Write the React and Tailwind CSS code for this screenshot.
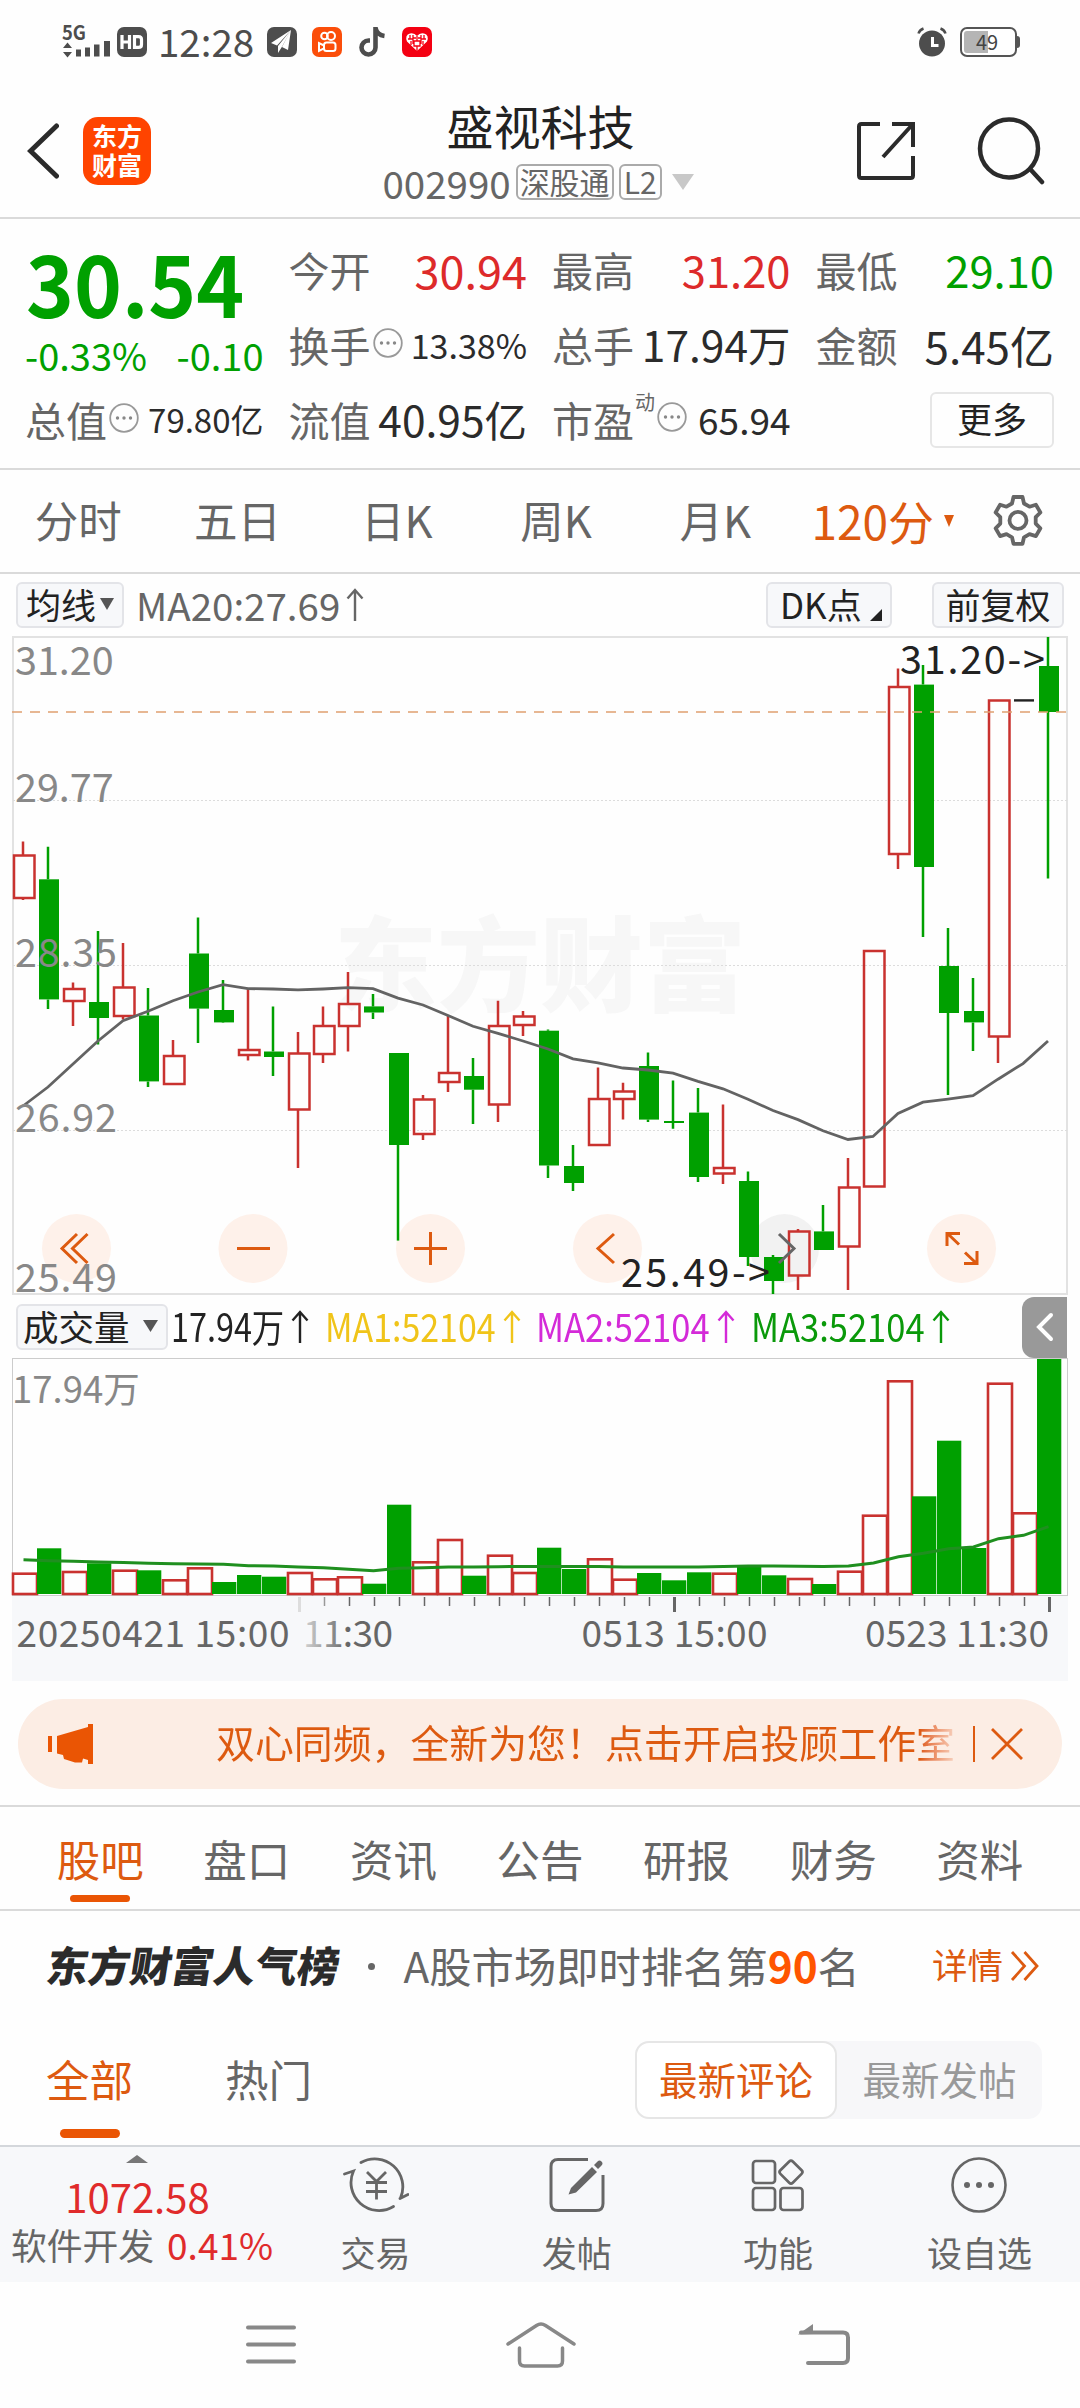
import React, { useState } from 'react';

const RED = '#c9322f';
const GREEN = '#00a000';
const STEP = 25;

// [type, high, bodyTop, bodyBottom, low] in chart pixels, one row per 120 min bar
const candles = [
  ['up', 205.6, 219.5, 262, 264],
  ['down', 210.8, 243.3, 363.4, 373],
  ['up', 346.5, 353, 365, 390],
  ['down', 295, 366, 382, 408.5],
  ['up', 307, 351.5, 380, 383.4],
  ['down', 352, 379.5, 445.4, 451],
  ['up', 404, 420, 448, 448],
  ['down', 281.5, 317.5, 372.6, 407],
  ['down', 344, 374, 386.4, 387],
  ['up', 352, 414, 419, 424.6],
  ['down', 370.4, 415.5, 421, 440],
  ['up', 396, 417.5, 473.5, 532],
  ['up', 370.4, 390, 418, 427],
  ['up', 336, 368, 390, 415.5],
  ['down', 358, 370.4, 376.5, 383],
  ['down', 417, 417, 509, 604.6],
  ['up', 459, 463.5, 498, 504],
  ['up', 380, 437, 446, 456],
  ['down', 422, 440, 453.7, 488],
  ['up', 364.7, 390, 468.5, 486],
  ['up', 375, 380.5, 389, 400],
  ['down', 393.4, 394.7, 529.5, 542],
  ['down', 509, 530, 547, 555],
  ['up', 431.5, 463, 509, 509],
  ['up', 446.7, 455.5, 463, 483.6],
  ['down', 416.4, 430, 483.6, 486],
  ['down', 444.5, 485, 487, 492.7],
  ['down', 452, 476.6, 541, 546],
  ['up', 468.4, 532, 537.5, 548],
  ['down', 535.6, 545, 621, 630],
  ['down', 619, 621, 645, 658],
  ['up', 593, 595.5, 639.5, 654],
  ['down', 569, 595.4, 614, 614],
  ['up', 522, 551.5, 610.5, 654],
  ['up', 315, 315, 550.5, 551],
  ['up', 32.6, 51, 218, 233],
  ['down', 29, 48.6, 231, 301],
  ['down', 292, 330, 377, 459],
  ['down', 342, 375, 386.4, 415],
  ['up', 64.5, 64.5, 400.5, 427],
  ['flat', 64.4, 64.4, 64.4, 64.4],
  ['down', 1, 30, 76, 242.5],
];

const ma20 = [
  470, 451, 428, 405, 384.7, 375.2, 364.7, 356, 348.7, 352.6, 353, 353.9, 353, 351.7,
  352.6, 362.1, 369, 379.5, 390.3, 397.3, 405, 413, 422.8, 426.8, 432, 434, 437.2, 445.4,
  452.8, 463.2, 474.5, 483.6, 494.8, 503.5, 500.5, 477.5, 466.2, 463.2, 459.7, 443.2, 427.6, 405,
];

const volumes = [
  214.7, 190.3, 213, 205.3, 211.7, 212.3, 221.3, 209.3, 224, 217, 218.7, 214, 220.3, 218.3,
  225.7, 146.7, 203.3, 181, 217.7, 196.7, 214, 189.7, 211, 200.3, 220.7, 215, 222.3, 214.3,
  214.7, 208.7, 217.3, 220, 226, 212.7, 156.7, 22.3, 138.3, 82.7, 190, 24.7, 154.3, 1,
];

// bars 7 and 40 are coloured by close against previous close, not by candle body
const volumeUp = [0, 2, 4, 6, 7, 11, 12, 13, 16, 17, 19, 20, 23, 24, 28, 31, 33, 34, 35, 39, 40];

const volumeMa = [
  201.7, 202.7, 203.3, 204, 204.5, 205.3, 205.7, 206, 206.3, 207.7, 208, 209, 209.7, 211.3,
  212.7, 210.3, 209.7, 209, 209, 208.7, 208.5, 208.5, 208.5, 208.5, 209, 209, 209, 209,
  208.5, 208, 208, 208.3, 208.5, 208, 205, 198.7, 195.3, 190.7, 189, 180.7, 177.3, 168.7,
];

const toPoints = (values, x0) => values.map((y, i) => `${x0 + i * STEP},${y}`).join(' ');

const Arrow = ({ className = '' }) => (
  <svg viewBox="0 0 20 34" className={`h-[34px] w-5 shrink-0 ${className}`} fill="none" stroke="currentColor" strokeWidth="2.4">
    <path d="M10 33V2M2.5 10.5 10 2l7.5 8.5" />
  </svg>
);

const Dots = () => (
  <svg viewBox="0 0 30 30" className="h-[30px] w-[30px] shrink-0">
    <circle cx="15" cy="15" r="13.8" fill="none" stroke="#999" strokeWidth="1.8" />
    <circle cx="8.5" cy="15" r="1.7" fill="#888" />
    <circle cx="15" cy="15" r="1.7" fill="#888" />
    <circle cx="21.5" cy="15" r="1.7" fill="#888" />
  </svg>
);

const StatusBar = () => (
  <div className="flex h-[84px] items-center pl-[62px] pr-[60px] text-[#4d4d4d]">
    <svg viewBox="0 0 48 34" className="mb-[2px] h-[34px] w-12 overflow-visible" fill="#4d4d4d">
      <text x="0" y="16" fontSize="20" fontWeight="700" textLength="24" lengthAdjust="spacingAndGlyphs">5G</text>
      <path d="M5.5 18.5 10 24H1zM5.5 33.5 10 28H1z" />
      <path d="M14 25.5h5v7h-5zM23 23.5h5v9h-5zM32 20.5h5.5v12h-5.5zM42 17h6v15.5h-6z" />
    </svg>
    <div className="ml-[7px] flex h-[30px] w-[30px] items-center justify-center rounded-[7px] bg-[#4d4d4d]">
      <svg viewBox="0 0 24 16" className="h-4 w-6" fill="none" stroke="#fff" strokeWidth="3.2">
        <path d="M2 1v14M9.5 1v14M2 8h7.5M14.5 2.6h4q3 0 3 3v4.8q0 3-3 3h-4z" />
      </svg>
    </div>
    <div className="ml-[11px] w-[98px] pb-[3px] text-[38.5px] leading-none">12:28</div>
    <svg viewBox="0 0 30 30" className="ml-[11px] h-[30px] w-[30px]">
      <rect width="30" height="30" rx="7" fill="#4d4d4d" />
      <path d="M24 3 4 16l6 2.5zM24 3 11 19v7l3.5-5.5zM24 3 15 20l6 3z" fill="#fff" />
    </svg>
    <svg viewBox="0 0 30 30" className="ml-[15px] h-[30px] w-[30px]" fill="none" stroke="#fff" strokeWidth="2">
      <rect width="30" height="30" rx="7" fill="#fb4e0a" stroke="none" />
      <circle cx="12.5" cy="9" r="3.3" />
      <circle cx="19" cy="9" r="4" />
      <rect x="12" y="15.5" width="11.5" height="8.5" rx="2.5" />
      <path d="m12 18.5-5-2.5v8l5-2.5z" />
    </svg>
    <svg viewBox="0 0 26 30" className="ml-[17px] h-[30px] w-[26px]" fill="none" stroke="#4d4d4d" strokeWidth="4.6">
      <path d="M16.5 0v20.5a7 7 0 1 1-7-7h1.5M16.500 1q1.5 7 9 8" />
    </svg>
    <svg viewBox="0 0 30 30" className="ml-[17px] h-[30px] w-[30px]">
      <rect width="30" height="30" rx="7" fill="#f40012" />
      <path d="M15 24 5 14.5Q2.5 8 8 6.500q4-1 7 2.500 3-3.500 7-2.500 5.500 1.500 3 8z" fill="#fff" />
      <path d="M8 8v4M6 12h5v5M15 9v5M12 14h6v5h-6zM22 8v4M24 12h-5v5M15 19v5M11 8v3h3M19 8v3h-3M9 14v4M21 14v4" fill="none" stroke="#f40012" strokeWidth="1.3" />
    </svg>
    <svg viewBox="0 0 30 30" className="ml-auto h-[30px] w-[30px]">
      <circle cx="15" cy="16.5" r="13" fill="#4d4d4d" />
      <path d="M15.5 10v8.500h6" fill="none" stroke="#fff" strokeWidth="3" />
      <path d="M1.500 6.500q1-3.500 5-5M28.500 6.500q-1-3.500-5-5" fill="none" stroke="#4d4d4d" strokeWidth="2.5" />
    </svg>
    <div className="ml-[13px] flex h-[30px] w-[57px] rounded-[7px] border-2 border-[#555] bg-white p-[2px]">
      <div className="relative h-full w-6 rounded-l-[3px] bg-[#b5b5b5]">
        <span className="absolute left-[12px] top-[-1px] text-[20px] leading-[23px] text-[#444]">49</span>
      </div>
    </div>
    <div className="h-3 w-[3px] rounded-r-sm bg-[#555]" />
  </div>
);

const Header = () => (
  <header className="flex h-[135px] items-center border-b-2 border-[#dadada] pr-[35px]">
    <svg viewBox="0 0 32 56" className="ml-[27px] h-14 w-8" fill="none" stroke="#2b2b2b" strokeWidth="5" strokeLinecap="round">
      <path d="M29.5 3 3.5 28l26 25" />
    </svg>
    <div className="ml-6 flex h-[68px] w-[68px] flex-col items-center justify-center rounded-[15px] bg-[#ff4400] pb-[1px] text-[25px] font-bold leading-[29px] text-white">
      <span>东方</span>
      <span>财富</span>
    </div>
    <div className="flex flex-1 flex-col items-center pl-[74px]">
      <div className="text-[47px] leading-[60px] text-[#222]">盛视科技</div>
      <div className="ml-[-5px] flex items-center pt-[3px] text-[#666]">
        <span className="text-[38.5px] leading-[48px]">002990</span>
        <span className="ml-[5px] h-9 rounded-md border-2 border-[#aaa] px-[2px] text-[30px] leading-[30px]">深股通</span>
        <span className="ml-[5px] h-9 rounded-md border-2 border-[#aaa] px-[3px] text-[30px] leading-[30px]">L2</span>
        <svg viewBox="0 0 22 16" className="ml-[10px] h-4 w-[22px]" fill="#c8c8c8"><path d="M0 0h22L11 16z" /></svg>
      </div>
    </div>
    <svg viewBox="0 0 60 60" className="mr-[61px] h-[60px] w-[60px]" fill="none" stroke="#2b2b2b" strokeWidth="4">
      <path d="M24 3H5.5Q3 3 3 5.5v49Q3 57 5.5 57h49q2.5 0 2.5-2.5V35M57 26V3H36M56 4 27 36" />
    </svg>
    <svg viewBox="0 0 68 68" className="h-[68px] w-[68px]" fill="none" stroke="#2b2b2b" strokeWidth="4.5" strokeLinecap="round">
      <circle cx="32" cy="31.5" r="29" />
      <path d="m54 53 11 12" />
    </svg>
  </header>
);

const Quote = ({ label, value, mark, color = 'text-[#2b2b2b]', size = 'text-[42.5px]' }) => (
  <div className="flex h-[75px] items-center justify-between whitespace-nowrap">
    <span className="ml-[-1px] flex items-center text-[41px] leading-none text-[#666]">
      {label}
      {mark === 'dyn' && <sup className="self-start text-[20px] leading-none top-[-7px] ml-[1px]">动</sup>}
      {mark && <span className={mark === 'dyn' ? 'ml-[2px] mt-[-6px]' : 'ml-[2px] mt-[-4px]'}><Dots /></span>}
    </span>
    <span className={`leading-none ${color} ${size}`}>{value}</span>
  </div>
);

const QuotePanel = () => (
  <section className="grid h-[251px] grid-cols-4 content-start gap-x-[26px] border-b-2 border-[#dadada] px-[26px] pt-[13px]">
    <div className="row-span-2 flex flex-col text-[#00a000]">
      <div className="mt-[6px] origin-left scale-x-[0.945] text-[86px] font-bold leading-[86px]">30.54</div>
      <div className="mt-[11px] ml-[-1px] flex justify-between text-[38px] leading-[40px]">
        <span>-0.33%</span>
        <span>-0.10</span>
      </div>
    </div>
    <Quote label="今开" value="30.94" color="text-[#dd2a2a]" size="text-[45px]" />
    <Quote label="最高" value="31.20" color="text-[#dd2a2a]" size="text-[43.5px]" />
    <Quote label="最低" value="29.10" color="text-[#00a000]" size="text-[43.5px]" />
    <Quote label="换手" value="13.38%" mark="info" size="text-[34px]" />
    <Quote label="总手" value="17.94万" />
    <Quote label="金额" value="5.45亿" size="text-[44px]" />
    <Quote label="总值" value="79.80亿" mark="info" size="text-[33px]" />
    <Quote label="流值" value="40.95亿" />
    <Quote label="市盈" value="65.94" mark="dyn" size="text-[37px]" />
    <div className="flex h-[75px] items-center justify-end">
      <button className="h-14 w-[124px] rounded-md border-2 border-[#e6e6e6] pb-1 text-[35px] leading-none text-[#222]">更多</button>
    </div>
  </section>
);

const periods = ['分时', '五日', '日K', '周K', '月K'];

const PeriodTabs = () => (
  <nav className="flex h-[104px] items-center border-b-2 border-[#dadada] text-[43.5px] leading-none text-[#666]">
    {periods.map(p => (
      <button key={p} className="w-[159.3px] pr-[3px] pb-[3px] leading-none">{p}</button>
    ))}
    <button className="ml-[15px] flex items-center whitespace-nowrap text-[46px] leading-none text-[#dd5a10]">
      <span className="pb-[3px]">120分</span>
      <svg viewBox="0 0 10 12" className="ml-[10px] h-3 w-[10px]" fill="#dd5a10"><path d="M0 0h10L5 12z" /></svg>
    </button>
    <svg viewBox="0 0 52 52" className="ml-auto mr-[36px] mt-[-3px] h-[52px] w-[52px]" fill="none" stroke="#666" strokeWidth="3.8" strokeLinejoin="round">
      <path d="M21.5 3h9l1.5 6.5 5.5 3.2 6.4-2 4.5 7.8-4.7 4.7v6.4l4.7 4.7-4.5 7.800-6.400-2-5.500 3.200-1.500 6.500h-9L20 43.300l-5.500-3.200-6.400 2-4.500-7.800 4.700-4.700v-6.400l-4.700-4.700 4.500-7.800 6.400 2L20 9.500z" />
      <circle cx="26" cy="26.4" r="8.5" />
    </svg>
  </nav>
);

const Chip = ({ className, children }) => (
  <button className={`flex h-[46px] items-center rounded-md border-2 border-[#e3e4e8] bg-[#f7f8fa] pb-[3px] leading-none whitespace-nowrap text-[#222] ${className}`}>
    {children}
  </button>
);

const IndicatorRow = () => (
  <div className="flex h-[62px] items-center pl-4 pr-4">
    <Chip className="w-[108px] px-2 text-[35px]">
      均线
      <svg viewBox="0 0 14 12" className="ml-1 h-3 w-[14px] shrink-0" fill="#555"><path d="M0 0h14L7 12z" /></svg>
    </Chip>
    <span className="ml-[12px] pb-[2px] text-[38.5px] leading-none text-[#666]">MA20:27.69</span>
    <Arrow className="ml-[5px] text-[#666]" />
    <Chip className="ml-auto w-[126px] pl-3 text-[35px]">
      DK点
      <svg viewBox="0 0 12 12" className="ml-[8px] mt-[22px] h-3 w-3 shrink-0" fill="#222"><path d="M12 0v12H0z" /></svg>
    </Chip>
    <Chip className="ml-[40px] w-[132px] justify-center text-[35px]">前复权</Chip>
  </div>
);

const KLineChart = () => (
  <svg viewBox="0 0 1080 660" className="block h-[660px] w-full overflow-visible">
    <g fill="none" stroke="#e2e2e2" strokeWidth="2">
      <rect x="13" y="1" width="1054" height="657" />
    </g>
    <text x="334" y="368" fontSize="103" fontWeight="900" fill="#f7f7f7">东方财富</text>
    <g stroke="#dcdcdc" strokeDasharray="2 2">
      <path d="M13 164.5h1054M13 329.5h1054M13 494.5h1054" />
    </g>
    {[76.5, 253, 430.5, 607.5, 961.5].map(cx => (
      <circle key={cx} cx={cx} cy="612.5" r="34.5" fill="#fef1ea" />
    ))}
    <circle cx="784.5" cy="612.5" r="34.5" fill="#f2f2f2" />

    {candles.map(([type, high, top, bottom, low], i) => {
      const x = 23 + i * STEP;
      if (type === 'flat') {
        return <path key={i} d={`M${x - 9} ${top}h20`} stroke="#222" strokeWidth="2.4" />;
      }
      const color = type === 'up' ? RED : GREEN;
      return (
        <g key={i} stroke={color} strokeWidth="2.500">
          <path d={`M${x} ${high}V${top}M${x} ${bottom}V${low}`} />
          {type === 'up'
            ? <rect x={x - 9} y={top} width="20.5" height={bottom - top} fill="none" />
            : <rect x={x - 9} y={top} width="20" height={bottom - top} fill={color} stroke="none" />}
        </g>
      );
    })}
    <path d="M12 76H1067" stroke="#e0a070" strokeWidth="1.600" strokeDasharray="10 8" />
    <polyline points={toPoints(ma20, 23)} fill="none" stroke="#636363" strokeWidth="2.800" />

    <g fill="#888" fontSize="39.5">
      <text x="15" y="39">31.20</text>
      <text x="15" y="166">29.77</text>
      <text x="15" y="331" textLength="102">28.35</text>
      <text x="15" y="495.5" textLength="102">26.92</text>
      <text x="15" y="656" textLength="102">25.49</text>
    </g>
    <g fill="#222" fontSize="39.5">
      <text x="900" y="38" textLength="145">31.20-&gt;</text>
      <text x="621" y="651" textLength="149">25.49-&gt;</text>
    </g>

    {/* pan and zoom buttons */}
    <g fill="none" stroke="#dd5a10" strokeWidth="3">
      <path d="M77 598 62 612.5 77 627M87.5 598l-15 14.5 15 14.5" />
      <path d="M237 612.5h33M414 612.5h33M430.5 596v33" />
      <path d="m614 598-16 14.5 16 14.5" />
      <path d="m779 598 15 14.5-15 14.5" stroke="#666" />
      <path d="M947 610v-12.5h13M948 598l11 10.5M977 615v12.5h-13M976 627l-11-10.5" />
    </g>
  </svg>
);

const Squeezed = ({ className, children }) => (
  <span className={`inline-block origin-left whitespace-nowrap text-[39px] leading-none ${className}`}>{children}</span>
);

const VolumeHeader = () => (
  <div className="flex h-[62px] items-center pl-4 pr-[13px]">
    <Chip className="w-[152px] shrink-0 px-[5px] text-[35.5px]">
      成交量
      <svg viewBox="0 0 15 12" className="ml-[13px] h-3 w-[15px] shrink-0" fill="#555"><path d="M0 0h15L7.5 12z" /></svg>
    </Chip>
    <div className="ml-[3px] w-[119px] shrink-0 pb-[2px]"><Squeezed className="scale-x-[0.83] text-[#222]">17.94万</Squeezed></div>
    <Arrow className="text-[#222]" />
    <div className="ml-[15px] w-[177px] shrink-0 pb-[2px]"><Squeezed className="scale-x-[0.87] text-[#f0c419]">MA1:52104</Squeezed></div>
    <Arrow className="text-[#f0c419]" />
    <div className="ml-[14px] w-[180px] shrink-0 pb-[2px]"><Squeezed className="scale-x-[0.885] text-[#d42ad8]">MA2:52104</Squeezed></div>
    <Arrow className="text-[#d42ad8]" />
    <div className="ml-[15px] w-[180px] shrink-0 pb-[2px]"><Squeezed className="scale-x-[0.885] text-[#0a990a]">MA3:52104</Squeezed></div>
    <Arrow className="text-[#0a990a]" />
    <button className="ml-auto flex h-[61px] w-[45px] items-center justify-center rounded-l-[12px] bg-[#999]">
      <svg viewBox="0 0 18 30" className="h-[30px] w-[18px]" fill="none" stroke="#fff" strokeWidth="4" strokeLinecap="round">
        <path d="M15 3 3 15l12 12" />
      </svg>
    </button>
  </div>
);

const VolumeChart = () => (
  <svg viewBox="0 0 1080 323" className="block h-[323px] w-full overflow-visible">
    <defs>
      <linearGradient id="fade" x1="0" x2="1">
        <stop offset="0" stopColor="#d4d4d4" />
        <stop offset="0.5" stopColor="#666" />
      </linearGradient>
    </defs>
    <rect x="12" y="238" width="1056" height="85" fill="#f7f8fa" />
    <rect x="12.5" y="0.5" width="1055" height="237" fill="none" stroke="#ccc" />
    <text x="12" y="45" fontSize="36.5" fill="#888">17.94万</text>
    {volumes.map((y, i) => {
      const x = 12 + i * STEP;
      return volumeUp.includes(i)
        ? <rect key={i} x={x + 1} y={y + 1} width="24" height={235 - y} fill="none" stroke={RED} strokeWidth="2.6" />
        : <rect key={i} x={x} y={y} width="24.3" height={236 - y} fill={GREEN} />;
    })}
    <polyline points={toPoints(volumeMa, 23.5)} fill="none" stroke="#1f8f1f" strokeWidth="3" />
    {volumes.map((_, i) => {
      if (i < 11) return null;
      const x = 24.5 + i * STEP;
      const major = i === 11 || i === 26 || i === 41;
      return (
        <path
          key={i}
          d={`M${x} 239v${major ? 15 : 9}`}
          stroke={i === 11 ? '#ddd' : i === 12 ? '#999' : '#666'}
          strokeWidth={major ? 3 : 1.5}
        />
      );
    })}
    <g fill="#666" fontSize="37">
      <text x="16.5" y="288.5" textLength="273">20250421 15:00</text>
      <text x="303" y="288.5" textLength="90" fill="url(#fade)">11:30</text>
      <text x="581.5" y="288.5" textLength="186">0513 15:00</text>
      <text x="865" y="288.5" textLength="184">0523 11:30</text>
    </g>
  </svg>
);

const Banner = () => (
  <div className="flex h-[126px] items-start border-b-2 border-[#dadada] px-[18px] pt-[18px]">
    <div className="flex h-[90px] w-full items-center rounded-full bg-[#fcede4] pl-[30px] pr-[39px] text-[#dd5a10]">
      <svg viewBox="0 0 46 40" className="h-10 w-[46px] shrink-0" fill="#ea5504">
        <path d="M0 12h4v16H0zM9 12 40 3V0h5v40h-5v-4l-5-1.5-1 4h-7L16 35l-1-4-6-1.5z" />
      </svg>
      <div className="ml-[122px] w-[742px] overflow-hidden whitespace-nowrap bg-gradient-to-r from-[#dd5a10] from-95% to-[#f7d9c8] bg-clip-text pb-[8px] pt-[2px] text-[38.9px] leading-[48px] text-transparent">
        双心同频，全新为您！点击开启投顾工作室
      </div>
      <div className="ml-[16px] h-9 w-[2px] shrink-0 bg-[#dd5a10]" />
      <svg viewBox="0 0 32 32" className="ml-4 h-8 w-8 shrink-0" fill="none" stroke="#dd5a10" strokeWidth="2.8">
        <path d="m1 1 30 30M31 1 1 31" />
      </svg>
    </div>
  </div>
);

const sections = ['股吧', '盘口', '资讯', '公告', '研报', '财务', '资料'];

const SectionTabs = ({ active, onChange }) => (
  <nav className="flex h-[104px] border-b-2 border-[#dadada] px-[27px] text-[43.5px]">
    {sections.map(s => (
      <button
        key={s}
        onClick={() => onChange(s)}
        className={`flex flex-1 flex-col items-center whitespace-nowrap pt-[24px] leading-[56px] ${s === active ? 'text-[#dd5a10]' : 'text-[#666]'}`}
      >
        {s}
        {s === active && <span className="mt-[8px] h-[7px] w-[60px] rounded-full bg-[#ea5504]" />}
      </button>
    ))}
  </nav>
);

const RankRow = () => (
  <div className="flex h-[110px] items-center pl-[47px] pr-[40px] leading-none whitespace-nowrap text-[#666]">
    <span className="-skew-x-[9deg] pb-[2px] text-[41.8px] font-black leading-none text-[#2b2b2b]">东方财富人气榜</span>
    <span className="ml-[28px] h-[7px] w-[7px] rounded-full bg-[#666]" />
    <span className="ml-[29px] pb-[2px] text-[42.3px] leading-none">
      A股市场即时排名第<b className="text-[#ff5500]">90</b>名
    </span>
    <span className="ml-auto pb-[4px] text-[35.5px] leading-none text-[#dd5a10]">详情</span>
    <svg viewBox="0 0 30 30" className="ml-[7px] h-[30px] w-[30px]" fill="none" stroke="#dd5a10" strokeWidth="2.8">
      <path d="m2 1 12.5 14L2 29M14.5 1 27 15 14.5 29" />
    </svg>
  </div>
);

const FilterRow = ({ sort, onSort }) => (
  <div className="flex h-[124px] items-start pl-[46px] pr-[38px]">
    <div className="flex flex-col items-center pt-[30px] text-[43.5px] leading-[56px] text-[#dd5a10]">
      全部
      <span className="mt-[22px] h-[9px] w-[60px] rounded-full bg-[#ea5504]" />
    </div>
    <div className="ml-[92px] pt-[30px] text-[43.5px] leading-[56px] text-[#666]">热门</div>
    <div className="ml-auto mt-[20px] flex h-[78px] w-[407px] rounded-[14px] bg-[#f7f7f9] text-[38.5px] leading-none">
      {['最新评论', '最新发帖'].map(s => (
        <button
          key={s}
          onClick={() => onSort(s)}
          className={
            s === sort
              ? 'w-[202px] rounded-[14px] border-2 border-[#e6e6e6] bg-white pb-[3px] text-[#dd5a10]'
              : 'w-[205px] pb-[3px] text-[#999]'
          }
        >
          {s}
        </button>
      ))}
    </div>
  </div>
);

const TradeIcon = () => (
  <svg viewBox="0 0 66 60" className="h-[60px] w-[66px]" fill="none" stroke="#666" strokeWidth="2.8" strokeLinecap="round">
    <path d="M18 7.5A28 28 0 0 1 57.500 43M1.500 19l9-3A28 28 0 0 0 50.500 51.500M65 39.500l-8 4" />
    <path d="m24 17 9.5 9.5L43 17M23 27.5h21M23 36.500h21M33.500 27v17.500" strokeLinecap="butt" />
  </svg>
);

const PostIcon = () => (
  <svg viewBox="0 0 56 56" className="h-14 w-14" fill="none" stroke="#666" strokeWidth="3">
    <path d="M39 2.5H9Q2 2.5 2 9.500v37q0 7 7 7h38q7 0 7-7V18" />
    <path d="M19.500 37.500 22 31 43 10l5 5-21 20.500zM45 8l3.500-3.500q2-2 4 0t0 4L49 12z" fill="#666" stroke="none" />
  </svg>
);

const GridIcon = () => (
  <svg viewBox="0 0 54 54" className="h-[54px] w-[54px]" fill="none" stroke="#666" strokeWidth="2.7">
    <rect x="2" y="3" width="22" height="22" rx="3" />
    <rect x="2" y="30" width="22" height="22" rx="3" />
    <rect x="29.5" y="30" width="22" height="22" rx="3" />
    <rect x="31.3" y="5.3" width="17.5" height="17.5" rx="2.5" transform="rotate(45 40 14)" />
  </svg>
);

const MoreIcon = () => (
  <svg viewBox="0 0 56 56" className="h-14 w-14">
    <circle cx="28" cy="28" r="26.5" fill="none" stroke="#666" strokeWidth="2.6" />
    <circle cx="16" cy="28" r="3" fill="#666" />
    <circle cx="28" cy="28" r="3" fill="#666" />
    <circle cx="40" cy="28" r="3" fill="#666" />
  </svg>
);

const actions = [
  { label: '交易', Icon: TradeIcon },
  { label: '发帖', Icon: PostIcon },
  { label: '功能', Icon: GridIcon },
  { label: '设自选', Icon: MoreIcon },
];

const BottomBar = () => (
  <footer className="flex h-[137px] border-t-2 border-[#d4d7db] bg-[#f7f8fa] text-[#666]">
    <div className="flex w-[275px] flex-col items-center whitespace-nowrap pt-[8px]">
      <svg viewBox="0 0 22 8" className="h-2 w-[22px]" fill="#777"><path d="M0 8h22L11 0z" /></svg>
      <div className="mt-[10px] text-[40px] leading-[46px] text-[#e02b2b]">1072.58</div>
      <div className="mt-[3px] ml-[9px] flex items-center text-[35.8px] leading-[44px]">
        软件开发<span className="ml-[13px] text-[37px] text-[#e02b2b]">0.41%</span>
      </div>
    </div>
    {actions.map(({ label, Icon }) => (
      <button key={label} className="flex w-[201.300px] flex-col items-center pt-[8px] text-[35px] leading-none">
        <span className="flex h-[60px] items-center"><Icon /></span>
        <span className="mt-[19px]">{label}</span>
      </button>
    ))}
  </footer>
);

const SystemNav = () => (
  <div className="flex h-[125px] items-center pl-[246px]">
    <svg viewBox="0 0 50 40" className="h-10 w-[50px]" stroke="#888" strokeWidth="4" strokeLinecap="round">
      <path d="M2 2.5h46M2 19.5h46M2 36.5h46" />
    </svg>
    <svg viewBox="0 0 70 46" className="ml-[210px] h-[46px] w-[70px]" fill="none" stroke="#888" strokeWidth="3.500" strokeLinecap="round">
      <path d="M2 22 30.500 3.500q4.500-3 9 0L68 22M13.500 26v13q0 5 5 5h33q5 0 5-5V26" />
    </svg>
    <svg viewBox="0 0 52 42" className="ml-[222px] h-[42px] w-[52px]" fill="none" stroke="#888" strokeWidth="4" strokeLinecap="round">
      <path d="M3 8.500h42q5 0 5 5V34q0 5-5 5H10" />
      <path d="M0 10.500 15 0v10z" fill="#888" stroke="none" />
    </svg>
  </div>
);

const App = () => {
  const [section, setSection] = useState('股吧');
  const [sort, setSort] = useState('最新评论');

  return (
    <div className="flex h-[2408px] w-[1080px] flex-col overflow-hidden bg-[#fefefe] font-['Noto_Sans_CJK_SC',sans-serif] text-[#222]">
      <StatusBar />
      <Header />
      <QuotePanel />
      <PeriodTabs />
      <IndicatorRow />
      <KLineChart />
      <VolumeHeader />
      <VolumeChart />
      <Banner />
      <SectionTabs active={section} onChange={setSection} />
      <RankRow />
      <FilterRow sort={sort} onSort={setSort} />
      <BottomBar />
      <SystemNav />
    </div>
  );
};

export default App;
